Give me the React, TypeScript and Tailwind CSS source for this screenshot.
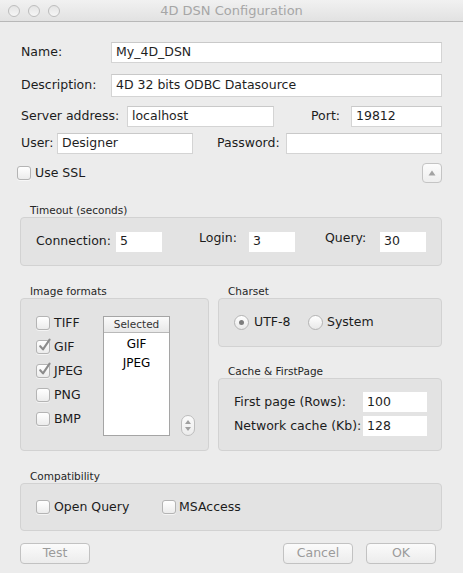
import React from 'react';

function Field({ value = '', className = '', bare = false }: { value?: string; className?: string; bare?: boolean }) {
  return (
    <div
      className={`bg-white flex items-center pl-[4px] text-[#1e1e1e] whitespace-nowrap overflow-hidden ${
        bare ? '' : 'border border-[#d4d4d4] border-t-[#c9c9c9] pl-[3px]'
      } ${className}`}
    >
      {value}
    </div>
  );
}

function Check({ checked = false }: { checked?: boolean }) {
  return (
    <div className="relative w-[14px] h-[14px] shrink-0 rounded-[3px] border border-[#b4b4b4] bg-gradient-to-b from-white to-[#ececec] shadow-[0_1px_0_rgba(255,255,255,0.6)]">
      {checked && (
        <svg className="absolute -top-[3px] left-[1px] overflow-visible" width="14" height="14" viewBox="0 0 14 14">
          <path d="M2.2 8.2 L5 11.4 L11.6 1.6" fill="none" stroke="#8c8c8c" strokeWidth="2.1" strokeLinecap="round" strokeLinejoin="round" />
        </svg>
      )}
    </div>
  );
}

function Radio({ on = false }: { on?: boolean }) {
  return (
    <div className="w-[15px] h-[15px] shrink-0 rounded-full border border-[#b4b4b4] bg-gradient-to-b from-white to-[#e9e9e9] flex items-center justify-center">
      {on && <div className="w-[5px] h-[5px] rounded-full bg-[#7c7c7c]" />}
    </div>
  );
}

function GroupLabel({ children }: { children: React.ReactNode }) {
  return <div className="h-[14px] leading-[14px] pl-[10px] text-[10.5px] text-[#262626]">{children}</div>;
}

function Button({ label, className = '' }: { label: string; className?: string }) {
  return (
    <div
      className={`w-[70px] h-[21px] rounded-[4px] border border-[#c2c2c2] bg-gradient-to-b from-[#fbfbfb] to-[#ececec] flex items-center justify-center text-[#9b9b9b] ${className}`}
    >
      {label}
    </div>
  );
}

export default function App() {
  return (
    <div className="w-[463px] h-[573px] bg-[#ececec] overflow-hidden font-['DejaVu_Sans','Liberation_Sans',sans-serif] text-[12.5px] text-[#1c1c1c]">
      {/* Title bar */}
      <div className="relative h-[22px] border-b border-[#b8b8b8] bg-gradient-to-b from-[#f1f1f1] to-[#e2e2e2] flex items-center justify-center">
        <div className="absolute left-[8px] top-[5px] flex gap-[8px]">
          <div className="w-[12px] h-[12px] rounded-full border border-[#bdbdbd] bg-gradient-to-b from-[#e4e4e4] to-[#f6f6f6]" />
          <div className="w-[12px] h-[12px] rounded-full border border-[#bdbdbd] bg-gradient-to-b from-[#e4e4e4] to-[#f6f6f6]" />
          <div className="w-[12px] h-[12px] rounded-full border border-[#bdbdbd] bg-gradient-to-b from-[#e4e4e4] to-[#f6f6f6]" />
        </div>
        <span className="text-[13px] text-[#a6a6a6]">4D DSN Configuration</span>
      </div>

      <div className="pl-[20px] pr-[21px]">
        {/* Name */}
        <div className="mt-[20px] flex items-center h-[21px]">
          <span className="w-[91px] pl-[1px]">Name:</span>
          <Field value="My_4D_DSN" className="flex-1 h-[21px]" />
        </div>

        {/* Description */}
        <div className="mt-[11px] flex items-center h-[23px]">
          <span className="w-[91px] pl-[1px]">Description:</span>
          <Field value="4D 32 bits ODBC Datasource" className="flex-1 h-[23px]" />
        </div>

        {/* Server / Port */}
        <div className="mt-[9px] flex items-center h-[21px]">
          <span className="w-[107px] pl-[1px]">Server address:</span>
          <Field value="localhost" className="w-[147px] h-[21px]" />
          <span className="ml-[37px] w-[40px]">Port:</span>
          <Field value="19812" className="flex-1 h-[21px]" />
        </div>

        {/* User / Password */}
        <div className="mt-[6px] flex items-center h-[21px]">
          <span className="w-[37px] pl-[1px]">User:</span>
          <Field value="Designer" className="w-[136px] h-[21px]" />
          <span className="ml-[24px] w-[69px]">Password:</span>
          <Field className="flex-1 h-[21px]" />
        </div>

        {/* SSL */}
        <div className="mt-[9px] flex items-center h-[20px]">
          <div className="-ml-[3px] flex items-center">
            <Check />
            <span className="ml-[4px]">Use SSL</span>
          </div>
          <div className="ml-auto w-[20px] h-[20px] rounded-[4px] border border-[#c4c4c4] bg-gradient-to-b from-[#fcfcfc] to-[#eeeeee] flex items-center justify-center">
            <svg width="8" height="6" viewBox="0 0 8 6">
              <path d="M4 0.5 L7.5 5.5 L0.5 5.5 Z" fill="#a3a3a3" />
            </svg>
          </div>
        </div>

        {/* Timeout */}
        <div className="mt-[20px]">
          <GroupLabel>Timeout (seconds)</GroupLabel>
          <div className="h-[49px] rounded-[4px] border border-[#d2d2d2] bg-[#e3e3e3] flex items-center pl-[15px]">
            <span className="w-[80px]">Connection:</span>
            <Field value="5" bare className="w-[46px] h-[20px]" />
            <span className="ml-[37px] w-[50px] mb-[6px]">Login:</span>
            <Field value="3" bare className="w-[46px] h-[20px]" />
            <span className="ml-[30px] w-[55px] mb-[6px]">Query:</span>
            <Field value="30" bare className="w-[46px] h-[20px]" />
          </div>
        </div>

        {/* Image formats / Charset / Cache */}
        <div className="mt-[18px] flex">
          <div className="w-[189px]">
            <GroupLabel>Image formats</GroupLabel>
            <div className="h-[153px] rounded-[4px] border border-[#d2d2d2] bg-[#e3e3e3] flex pl-[15px] pt-[12px]">
              <div className="w-[67px] flex flex-col">
                {[
                  ['TIFF', false],
                  ['GIF', true],
                  ['JPEG', true],
                  ['PNG', false],
                  ['BMP', false],
                ].map(([name, on]) => (
                  <div key={name as string} className="h-[24px] flex items-center">
                    <Check checked={on as boolean} />
                    <span className="ml-[4px]">{name as string}</span>
                  </div>
                ))}
              </div>
              <div className="mt-[5px] w-[67px] h-[120px] bg-white border border-[#a5a5a5] flex flex-col">
                <div className="h-[16px] border-b border-[#b9b9b9] bg-gradient-to-b from-[#fbfbfb] to-[#e8e8e8] flex items-center justify-center text-[10.5px] text-[#333]">
                  Selected
                </div>
                <div className="h-[19px] mt-[1px] flex items-center justify-center text-[12px] text-black">GIF</div>
                <div className="h-[19px] flex items-center justify-center text-[12px] text-black">JPEG</div>
              </div>
              <div className="ml-[11px] mt-[104px] w-[14px] h-[21px] rounded-[7px] border border-[#bdbdbd] bg-gradient-to-b from-[#fbfbfb] to-[#ececec] flex flex-col items-center justify-center gap-[3px]">
                <svg width="6" height="4" viewBox="0 0 6 4">
                  <path d="M3 0 L6 4 L0 4 Z" fill="#a0a0a0" />
                </svg>
                <svg width="6" height="4" viewBox="0 0 6 4">
                  <path d="M0 0 L6 0 L3 4 Z" fill="#a0a0a0" />
                </svg>
              </div>
            </div>
          </div>

          <div className="ml-[9px] flex-1">
            <GroupLabel>Charset</GroupLabel>
            <div className="h-[49px] rounded-[4px] border border-[#d2d2d2] bg-[#e3e3e3] flex items-center pl-[15px]">
              <div className="w-[74px] flex items-center">
                <Radio on />
                <span className="ml-[5px]">UTF-8</span>
              </div>
              <div className="flex items-center">
                <Radio />
                <span className="ml-[4px]">System</span>
              </div>
            </div>

            <div className="mt-[17px]">
              <GroupLabel>Cache &amp; FirstPage</GroupLabel>
            </div>
            <div className="h-[73px] rounded-[4px] border border-[#d2d2d2] bg-[#e3e3e3] flex flex-col gap-[4px] pl-[15px] pt-[13px]">
              <div className="flex items-center h-[20px]">
                <span className="w-[129px]">First page (Rows):</span>
                <Field value="100" bare className="w-[64px] h-[20px]" />
              </div>
              <div className="flex items-center h-[20px]">
                <span className="w-[129px]">Network cache (Kb):</span>
                <Field value="128" bare className="w-[64px] h-[20px]" />
              </div>
            </div>
          </div>
        </div>

        {/* Compatibility */}
        <div className="mt-[18px]">
          <GroupLabel>Compatibility</GroupLabel>
          <div className="h-[48px] rounded-[4px] border border-[#d2d2d2] bg-[#e3e3e3] flex items-center pl-[15px]">
            <div className="w-[126px] flex items-center">
              <Check />
              <span className="ml-[4px]">Open Query</span>
            </div>
            <div className="flex items-center">
              <Check />
              <span className="ml-[3px]">MSAccess</span>
            </div>
          </div>
        </div>

        {/* Buttons */}
        <div className="mt-[12px] flex items-center">
          <Button label="Test" />
          <Button label="Cancel" className="ml-auto" />
          <Button label="OK" className="ml-[13px] mr-[6px]" />
        </div>
      </div>
    </div>
  );
}
